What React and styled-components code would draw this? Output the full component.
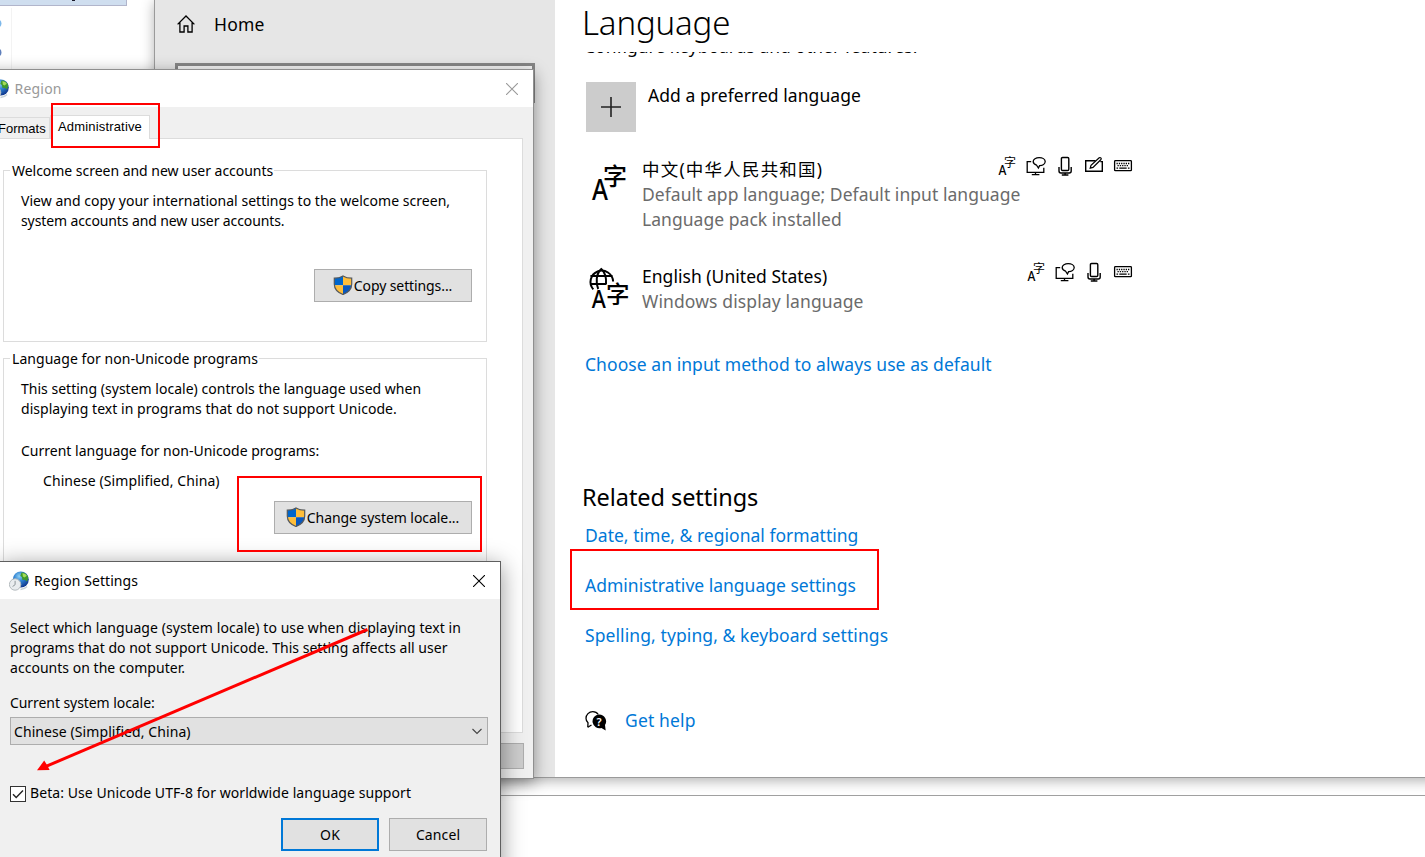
import React from 'react';
import styled, { createGlobalStyle, css } from 'styled-components';

const GlobalStyle = createGlobalStyle`
  * { box-sizing: border-box; }
  html, body { margin: 0; padding: 0; background: #fff; overflow: hidden; }
  button { font: inherit; color: inherit; }
`;

const uiFont = css`
  font-family: "Noto Sans", "Noto Sans CJK SC", sans-serif;
`;

const Desktop = styled.div`
  ${uiFont}
  position: relative;
  width: 1425px;
  height: 857px;
  overflow: hidden;
  background: #fff;
  color: #000;
`;

/* ---------- windows behind ---------- */

const Explorer = styled.div`
  position: absolute;
  left: 0;
  top: 0;
  width: 1425px;
  height: 796px;
  border-bottom: 1px solid #a0a0a0;
`;

const ExplorerTab = styled.div`
  width: 127px;
  height: 6px;
  background: #cfdeef;
  border: solid #b1b5cb;
  border-width: 0 1px 1px 0;
  svg { display: block; margin-left: 72px; }
`;

const ExplorerTree = styled.div`
  width: 12px;
  height: 70px;
  margin-top: 2px;
  border-right: 1px solid #f3f3f3;
  svg { display: block; }
`;

/* ---------- settings window ---------- */

const SettingsWindow = styled.div`
  position: absolute;
  left: 154px;
  top: -1px;
  width: 1290px;
  height: 779px;
  padding-top: 1px;
  display: flex;
  background: #fff;
  border-left: 1px solid #9a9a9a;
  border-bottom: 1px solid #9a9a9a;
  box-shadow: 0 3px 12px rgba(0, 0, 0, 0.3);
`;

const Sidebar = styled.nav`
  width: 400px;
  background: #e6e6e6;
`;

const HomeLink = styled.div`
  display: flex;
  align-items: center;
  gap: 19px;
  height: 48px;
  padding-left: 22px;
  font-size: 17.5px;
  letter-spacing: 0.2px;
  line-height: 25px;
`;

const SearchBox = styled.div`
  width: 360px;
  height: 40px;
  margin: 15px 0 0 20px;
  border: 3px solid #868686;
  background: #f4f4f4;
`;

const Main = styled.main`
  flex: 1;
`;

const PageTitle = styled.h1`
  margin: 0;
  height: 52px;
  padding-left: 27px;
  font-size: 33px;
  font-weight: 300;
  line-height: 45px;
  letter-spacing: -0.15px;
`;

const Scroller = styled.div`
  width: 620px;
  height: 720px;
  padding-left: 28px;
  overflow: hidden;
  font-size: 17.5px;
  line-height: 25px;
`;

const Line = styled.div`
  white-space: nowrap;
  letter-spacing: ${(p) => p.$ls || 0}px;
  color: ${(p) => (p.$muted ? '#6b6b6b' : 'inherit')};
`;

const Intro = styled(Line)`
  margin: -18px 0 0 1px;
`;

const AddRow = styled.div`
  display: flex;
  gap: 12px;
  margin: 23px 0 0 3px;
`;

const AddTile = styled.div`
  display: flex;
  align-items: center;
  justify-content: center;
  width: 50px;
  height: 50px;
  background: #ccc;
`;

const AddLabel = styled(Line)`
  padding-top: 1px;
`;

const LanguageItem = styled.div`
  display: flex;
  width: 550px;
  margin-top: ${(p) => p.$gap}px;
`;

const LanguageGlyph = styled.div`
  width: 59px;
  flex: none;
  svg { display: block; overflow: visible; margin: 0 0 -20px 5px; }
`;

const LanguageText = styled.div`
  flex: 1;
  min-width: 0;
`;

const Features = styled.div`
  display: flex;
  flex: none;
  gap: 9px;
  height: 20px;
  margin-top: ${(p) => p.$top}px;
  svg { display: block; overflow: visible; }
`;

const Link = styled.a`
  display: block;
  white-space: nowrap;
  color: #0078d7;
  letter-spacing: ${(p) => p.$ls || 0}px;
`;

const DefaultInput = styled(Link)`
  margin: 38px 0 0 2px;
`;

const SectionTitle = styled.h2`
  margin: 104px 0 0 -1px;
  font-size: 23.5px;
  font-weight: 400;
  line-height: 32px;
  letter-spacing: -0.06px;
`;

const Links = styled.div`
  display: flex;
  flex-direction: column;
  gap: 25px;
  margin: 10px 0 0 2px;
`;

const HelpRow = styled.div`
  display: flex;
  align-items: center;
  gap: 18px;
  margin: 60px 0 0 2px;
`;

/* ---------- dialogs ---------- */

const Dialog = styled.section`
  position: absolute;
  left: ${(p) => p.$x}px;
  top: ${(p) => p.$y}px;
  width: ${(p) => p.$w}px;
  height: ${(p) => p.$h}px;
  background: #f0f0f0;
  border: 1px solid ${(p) => (p.$active ? '#5f5f5f' : '#8f8f8f')};
  box-shadow: ${(p) => (p.$active ? '0 4px 22px rgba(0,0,0,.42)' : '0 4px 15px rgba(0,0,0,.4)')};
  font-size: 14px;
  line-height: 20px;
`;

const TitleBar = styled.header`
  display: flex;
  align-items: center;
  height: 37px;
  padding: 0 15px 0 ${(p) => p.$pad}px;
  background: #fff;
  color: ${(p) => (p.$active ? '#000' : '#999')};
  svg { display: block; flex: none; }
`;

const TitleText = styled.span`
  flex: 1;
  margin-left: ${(p) => p.$gap}px;
  letter-spacing: ${(p) => p.$ls}px;
`;

const TabStrip = styled.div`
  display: flex;
  align-items: flex-end;
  height: 31px;
  margin-left: 8px;
  font: 13px/20px "Liberation Sans", sans-serif;
`;

const Tab = styled.div`
  position: relative;
  width: ${(p) => p.$w}px;
  height: ${(p) => (p.$active ? 24 : 21)}px;
  margin-bottom: ${(p) => (p.$active ? -1 : 0)}px;
  padding: ${(p) => (p.$active ? '1px 0 0 7px' : '1px 0 0 8px')};
  border: 1px solid #dcdcdc;
  border-bottom: 0;
  background: ${(p) => (p.$active ? '#fff' : '#f0f0f0')};
  letter-spacing: ${(p) => p.$ls}px;
  white-space: nowrap;
`;

const TabPage = styled.div`
  height: 595px;
  margin: 0 10px 0 8px;
  padding: 31px 0 0 13px;
  background: #fff;
  border: 1px solid #dcdcdc;
`;

const Group = styled.div`
  display: flex;
  flex-direction: column;
  width: 484px;
  height: ${(p) => p.$h}px;
  margin-bottom: 16px;
  padding: 0 14px 0 17px;
  border: 1px solid #dcdcdc;
`;

const Legend = styled(Line)`
  align-self: flex-start;
  margin: -10px 0 10px -11px;
  padding: 0 1px 0 2px;
  background: #fff;
`;

const Value = styled(Line)`
  margin: 10px 0 10px 22px;
`;

const Caption = styled(Line)`
  margin-top: ${(p) => p.$top}px;
`;

const PushButton = styled.button`
  display: flex;
  align-items: center;
  justify-content: center;
  align-self: flex-end;
  width: ${(p) => p.$w}px;
  height: ${(p) => p.$h || 33}px;
  margin: ${(p) => p.$m || 0};
  padding: 0;
  background: ${(p) => p.$bg || '#e1e1e1'};
  border: ${(p) => (p.$primary ? '2px solid #0078d7' : '1px solid #adadad')};
  white-space: nowrap;
  letter-spacing: ${(p) => p.$ls || 0}px;
  svg { display: block; margin: -1px 1px 0 -1px; }
`;

const DialogFooter = styled.div`
  display: flex;
  justify-content: flex-end;
  padding: 10px 9px 0 0;
`;

const SettingsBody = styled.div`
  padding: 19px 13px 0 10px;
`;

const Select = styled.div`
  display: flex;
  align-items: center;
  justify-content: space-between;
  height: 28px;
  margin: 4px -1px 0 0;
  padding: 1px 4px 0 3px;
  background: #e1e1e1;
  border: 1px solid #adadad;
  svg { display: block; }
`;

const CheckRow = styled.label`
  display: flex;
  gap: 4px;
  margin-top: 38px;
`;

const CheckBox = styled.span`
  width: 16px;
  height: 16px;
  margin-top: 3px;
  border: 1px solid #333;
  background: #fff;
  svg { display: block; }
`;

const Actions = styled.div`
  display: flex;
  justify-content: flex-end;
  gap: 10px;
  margin-top: 15px;
`;

/* ---------- annotations ---------- */

const RedBox = styled.div`
  position: absolute;
  left: ${(p) => p.$x}px;
  top: ${(p) => p.$y}px;
  width: ${(p) => p.$w}px;
  height: ${(p) => p.$h}px;
  border: 2px solid #f00;
`;

const ArrowLayer = styled.svg`
  position: absolute;
  left: 30px;
  top: 620px;
`;

/* ---------- icons ---------- */

const HomeIcon = () => (
  <svg width="18" height="18" viewBox="0 0 18 18" fill="none" stroke="#000" strokeWidth="1.3">
    <path d="M0.6 9.4 9 1l8.400 8.400M2.900 7.400v9.600h4.200v-6h3.800v6h4.200V7.400" />
  </svg>
);

const PlusIcon = () => (
  <svg width="20" height="20" viewBox="0 0 20 20" stroke="#222" strokeWidth="1.6">
    <path d="M0 10h20M10 0v20" />
  </svg>
);

const CloseIcon = ({ color }) => (
  <svg width="12" height="12" viewBox="0 0 12 12" stroke={color} strokeWidth="1.1">
    <path d="M0 0 12 12M12 0 0 12" />
  </svg>
);

const cjk = '"Noto Sans CJK SC", sans-serif';
const latin = '"Noto Sans", sans-serif';

const LanguageIcon = () => (
  <svg width="42" height="44" viewBox="0 0 42 44">
    <text x="15" y="28" fontFamily={cjk} fontWeight="500" fontSize="24">字</text>
    <text transform="translate(4 43) scale(.84 1)" fontFamily={latin} fontWeight="500" fontSize="29">A</text>
  </svg>
);

const DisplayLanguageIcon = () => (
  <svg width="42" height="44" viewBox="0 0 42 44">
    <g fill="none" stroke="#000" strokeWidth="2">
      <path d="M5.300 25.400A11.300 11.300 0 1 1 25.100 17.500M2.400 12h22.200M2.400 20h15.600" />
      <path d="M10.200 25C7.600 19 8 9.500 13.300 5c4 3.400 5.200 8.600 4.700 15.500" />
    </g>
    <text x="18" y="38.800" fontFamily={cjk} fontWeight="500" fontSize="23.500">字</text>
    <text transform="translate(3.700 43.700) scale(.86 1)" fontFamily={latin} fontWeight="500" fontSize="25">A</text>
  </svg>
);

const TextFeature = () => (
  <svg width="20" height="20" viewBox="0 0 20 20">
    <text x="7" y="11" fontFamily={cjk} fontWeight="400" fontSize="12">字</text>
    <text transform="translate(1.500 19) scale(.86 1)" fontFamily={latin} fontWeight="500" fontSize="14">A</text>
  </svg>
);

const SpeechFeature = () => (
  <svg width="20" height="20" viewBox="0 0 20 20" fill="none" stroke="#000" strokeWidth="1.3">
    <path d="M5.200 5.700H1.200v10.600h16.600v-4.500M9.500 16.300v2M5.800 18.600h7.600" />
    <path d="M10.600 9.200C8.400 8.500 7.200 7.200 7.200 5.600c0-2.300 2.700-4 6-4s6 1.700 6 4-2.600 4-5.600 4L12.400 12z" />
  </svg>
);

const MicFeature = () => (
  <svg width="20" height="20" viewBox="0 0 20 20" fill="none" stroke="#000" strokeWidth="1.4">
    <rect x="6.400" y="1.500" width="7.400" height="13" rx="1.200" />
    <path d="M4 11v4c0 1.400.8 2 2 2h8.200c1.200 0 2-.6 2-2v-4M10.100 17v2M6.800 19h6.600" />
  </svg>
);

const PenFeature = () => (
  <svg width="20" height="20" viewBox="0 0 20 20" fill="none" stroke="#000" strokeWidth="1.4">
    <path d="M11.500 4.700H1.700v10.600h16.600V5.600h-2" />
    <path d="M6.200 12.200 7 9.400l8.200-7.600c1.200-.8 2.600.5 1.800 1.700L9 11.400z" strokeWidth="1.2" />
  </svg>
);

const KeyboardFeature = () => (
  <svg width="20" height="20" viewBox="0 0 20 20" fill="none" stroke="#000">
    <rect x="1.600" y="4.700" width="16.800" height="10" rx=".8" strokeWidth="1.300" />
    <path d="M3.500 7.500h13M4.500 9.700h11" strokeWidth="1.300" strokeDasharray="1.300 1" />
    <path d="M3.500 12.200h1.600M6.300 12.200h7.400M14.900 12.200h1.600" strokeWidth="1.300" />
  </svg>
);

const HelpIcon = () => (
  <svg width="22" height="22" viewBox="0 0 22 22">
    <path d="M2.800 17.300 3 12.800C1.600 11.600 1 10 1 8.300 1 4.600 4 1.700 7.800 1.700c2.300 0 4.300 1 5.500 2.800" fill="none" stroke="#000" strokeWidth="1.300" />
    <path d="M2.800 17.300 6.500 15" fill="none" stroke="#000" strokeWidth="1.300" />
    <path d="M14 4.500a6.900 6.900 0 0 1 6 10.600l.7 5.400-4.300-2.500A6.900 6.900 0 1 1 14 4.500z" />
    <text x="14" y="15.600" textAnchor="middle" fill="#fff" fontFamily={latin} fontWeight="600" fontSize="11">?</text>
  </svg>
);

const ShieldIcon = () => (
  <svg width="20" height="20" viewBox="0 0 20 20">
    <clipPath id="shield"><path d="M10 .8C7.500 2.500 4.500 3.200 1.300 3.200V9c0 5 3.700 8.600 8.700 10.600 5-2 8.700-5.600 8.700-10.600V3.200C15.500 3.200 12.500 2.500 10 .8z" /></clipPath>
    <g clipPath="url(#shield)">
      <path fill="#0066cc" d="M0 0h10v10.200H0z" />
      <path fill="#ffbe3b" d="M10 0h10v10.200H10zM0 10.200h10V20H0z" />
      <path fill="#0a58be" d="M10 10.200h10V20H10z" />
    </g>
    <path d="M10 .9C7.500 2.500 4.500 3.200 1.300 3.200V9c0 5 3.700 8.600 8.700 10.500 5-1.900 8.700-5.500 8.700-10.500V3.200C15.500 3.200 12.500 2.500 10 .9z" fill="none" stroke="#55595c" strokeWidth="1.200" />
  </svg>
);

const RegionIcon = () => (
  <svg width="20" height="20" viewBox="0 0 20 20">
    <defs>
      <radialGradient id="globe" cx=".4" cy=".3" r=".75">
        <stop offset="0" stopColor="#8fd0f5" />
        <stop offset=".45" stopColor="#2c7fd0" />
        <stop offset="1" stopColor="#0d2f86" />
      </radialGradient>
    </defs>
    <circle cx="11.800" cy="8.500" r="8" fill="url(#globe)" />
    <path d="M12.500 1.500c3-.3 6 2 6.800 5l-1.300 4-2.300-1.700-2.200.2-.6-3-1.600-1z" fill="#3f9a2c" />
    <path d="M13.500 2.200c2 0 3.500 1 4.300 2.600l-2.300 1.600-1.700-1z" fill="#a4dc5b" />
    <circle cx="6.100" cy="13.500" r="5.700" fill="#e9edef" stroke="#b3babd" />
    <path d="M6.100 9.800v3.900L3.600 15.500" fill="none" stroke="#8d9699" />
    <path d="M11.500 18.500c3-.3 5-1.200 6.500-3" stroke="#c9d3d8" strokeWidth="1.500" fill="none" />
  </svg>
);

const FEATURES = { text: TextFeature, speech: SpeechFeature, mic: MicFeature, pen: PenFeature, keyboard: KeyboardFeature };

const FeatureList = ({ names, top }) => (
  <Features $top={top}>
    {names.map((n) => {
      const Icon = FEATURES[n];
      return <Icon key={n} />;
    })}
  </Features>
);

function Settings() {
  return (
    <SettingsWindow>
      <Sidebar>
        <HomeLink><HomeIcon />Home</HomeLink>
        <SearchBox />
      </Sidebar>
      <Main>
        <PageTitle>Language</PageTitle>
        <Scroller>
          <Intro>Configure keyboards and other features.</Intro>
          <AddRow>
            <AddTile><PlusIcon /></AddTile>
            <AddLabel $ls={0.06}>Add a preferred language</AddLabel>
          </AddRow>
          <LanguageItem $gap={25}>
            <LanguageGlyph><LanguageIcon /></LanguageGlyph>
            <LanguageText>
              <Line $ls={1.2}>中文(中华人民共和国)</Line>
              <Line $muted $ls={0.04}>Default app language; Default input language</Line>
              <Line $muted $ls={0.04}>Language pack installed</Line>
            </LanguageText>
            <FeatureList top={-1} names={['text', 'speech', 'mic', 'pen', 'keyboard']} />
          </LanguageItem>
          <LanguageItem $gap={32}>
            <LanguageGlyph><DisplayLanguageIcon /></LanguageGlyph>
            <LanguageText>
              <Line $ls={0.03}>English (United States)</Line>
              <Line $muted $ls={0.12}>Windows display language</Line>
            </LanguageText>
            <FeatureList top={-2} names={['text', 'speech', 'mic', 'keyboard']} />
          </LanguageItem>
          <DefaultInput $ls={0.06}>Choose an input method to always use as default</DefaultInput>
          <SectionTitle>Related settings</SectionTitle>
          <Links>
            <Link $ls={0.02}>Date, time, &amp; regional formatting</Link>
            <Link $ls={0}>Administrative language settings</Link>
            <Link $ls={0.09}>Spelling, typing, &amp; keyboard settings</Link>
          </Links>
          <HelpRow><HelpIcon /><Link $ls={0.15}>Get help</Link></HelpRow>
        </Scroller>
      </Main>
    </SettingsWindow>
  );
}

function RegionDialog() {
  return (
    <Dialog $x={-20} $y={69} $w={554} $h={710}>
      <TitleBar $pad={8}>
        <RegionIcon />
        <TitleText $gap={5.5} $ls={0.2}>Region</TitleText>
        <CloseIcon color="#999" />
      </TitleBar>
      <TabStrip>
        <Tab $w={61}>Formats</Tab>
        <Tab $active $w={100} $ls={0.17}>Administrative</Tab>
      </TabStrip>
      <TabPage>
        <Group $h={172}>
          <Legend $ls={-0.03}>Welcome screen and new user accounts</Legend>
          <Line $ls={0.03}>View and copy your international settings to the welcome screen,</Line>
          <Line $ls={-0.11}>system accounts and new user accounts.</Line>
          <PushButton $w={158} $m="38px 0 0" $ls={-0.1}><ShieldIcon />Copy settings...</PushButton>
        </Group>
        <Group $h={220}>
          <Legend $ls={0.05}>Language for non-Unicode programs</Legend>
          <Line $ls={0.015}>This setting (system locale) controls the language used when</Line>
          <Line $ls={0.04}>displaying text in programs that do not support Unicode.</Line>
          <Caption $top={22} $ls={0}>Current language for non-Unicode programs:</Caption>
          <Value $ls={0.08}>Chinese (Simplified, China)</Value>
          <PushButton $w={198} $ls={-0.06}><ShieldIcon />Change system locale...</PushButton>
        </Group>
      </TabPage>
      <DialogFooter>
        <PushButton $w={98} $h={26} $bg="#ccc" />
      </DialogFooter>
    </Dialog>
  );
}

function RegionSettingsDialog() {
  return (
    <Dialog $active $x={-1} $y={561} $w={502} $h={320}>
      <TitleBar $active $pad={9}>
        <RegionIcon />
        <TitleText $gap={5} $ls={0.08}>Region Settings</TitleText>
        <CloseIcon color="#000" />
      </TitleBar>
      <SettingsBody>
        <Line $ls={0.07}>Select which language (system locale) to use when displaying text in</Line>
        <Line $ls={0.01}>programs that do not support Unicode. This setting affects all user</Line>
        <Line $ls={0.03}>accounts on the computer.</Line>
        <Caption $top={15} $ls={-0.07}>Current system locale:</Caption>
        <Select>
          <Line $ls={0.08}>Chinese (Simplified, China)</Line>
          <svg width="12" height="8" viewBox="0 0 12 8" fill="none" stroke="#444" strokeWidth="1.1">
            <path d="M1.500 1 6 5.500 10.500 1" />
          </svg>
        </Select>
        <CheckRow>
          <CheckBox>
            <svg width="14" height="14" viewBox="0 0 14 14" fill="none" stroke="#222" strokeWidth="1.4">
              <path d="M2 7.200 5.200 10.400 12 3.500" />
            </svg>
          </CheckBox>
          <Line $ls={0.07}>Beta: Use Unicode UTF-8 for worldwide language support</Line>
        </CheckRow>
        <Actions>
          <PushButton $primary $w={98} $ls={0.2}>OK</PushButton>
          <PushButton $w={98} $ls={0.1}>Cancel</PushButton>
        </Actions>
      </SettingsBody>
    </Dialog>
  );
}

export default function App() {
  return (
    <>
      <GlobalStyle />
      <Desktop>
        <Explorer>
          <ExplorerTab>
            <svg width="3" height="1" viewBox="0 0 3 1"><path d="M0 0h3v1H0z" fill="#1a1a2a" /></svg>
          </ExplorerTab>
          <ExplorerTree>
            <svg width="4" height="60" viewBox="0 0 4 60">
              <circle cx="-3" cy="15.500" r="4.500" fill="#7db8ea" />
              <circle cx="-3.500" cy="44.500" r="5" fill="#5f7fbb" />
            </svg>
          </ExplorerTree>
        </Explorer>
        <Settings />
        <RegionDialog />
        <RegionSettingsDialog />
        <RedBox $x={51} $y={103} $w={109} $h={45} />
        <RedBox $x={237} $y={476} $w={245} $h={76} />
        <RedBox $x={570} $y={549} $w={309} $h={61} />
        <ArrowLayer width="350" height="160" viewBox="30 620 350 160">
          <path d="M367.500 629.500 46 766.400" stroke="#f00" strokeWidth="3" />
          <path d="M37 770.200 44.200 760.600 47.500 765.700 49.600 769.900z" fill="#f00" />
        </ArrowLayer>
      </Desktop>
    </>
  );
}
